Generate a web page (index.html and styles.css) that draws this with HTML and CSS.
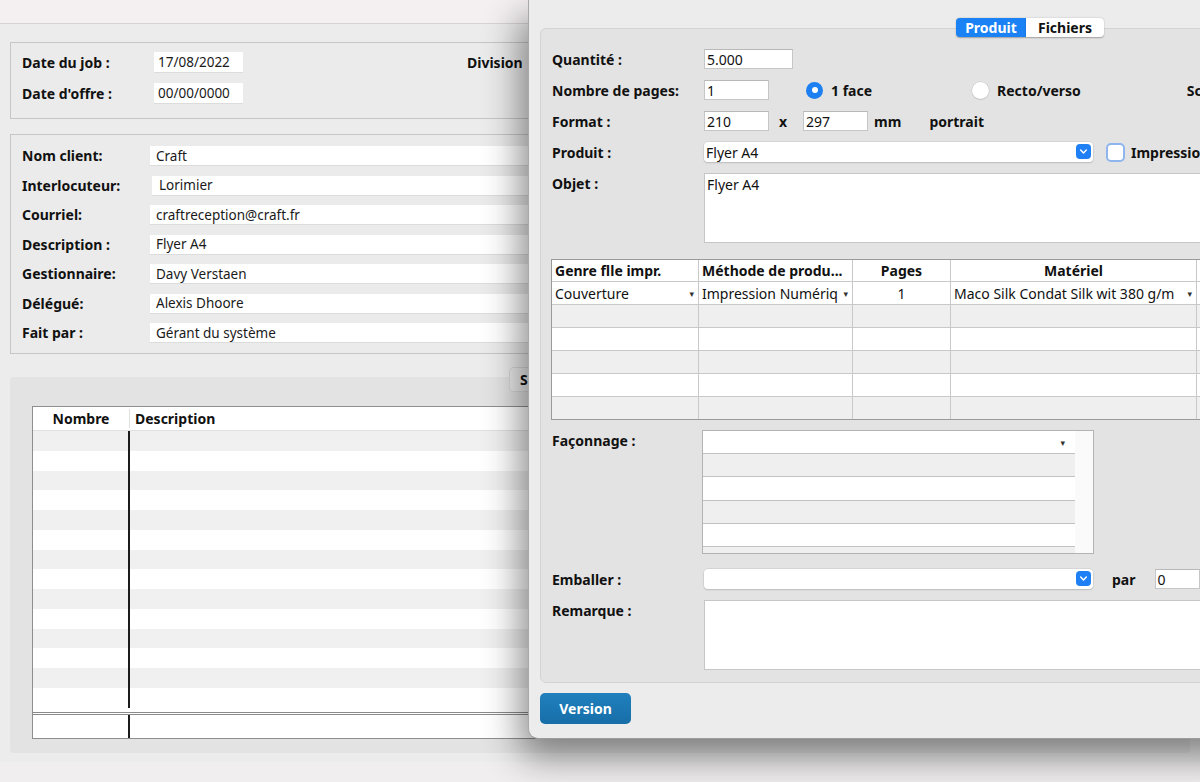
FILE: index.html
```html
<!DOCTYPE html>
<html lang="fr">
<head>
<meta charset="utf-8">
<title>Job</title>
<link rel="stylesheet" href="styles.css">
</head>
<body>
<div class="desk">
  <div class="back">
    <div class="titlebar"></div>
    <div class="back-body">
      <section class="panel p-dates">
        <div class="row">
          <span class="lbl">Date du job :</span>
          <span class="field short">17/08/2022</span>
          <span class="lbl division">Division</span>
        </div>
        <div class="row">
          <span class="lbl">Date d'offre :</span>
          <span class="field short">00/00/0000</span>
        </div>
      </section>
      <section class="panel p-client">
        <div class="row"><span class="lbl">Nom client:</span><span class="field long">Craft</span></div>
        <div class="row"><span class="lbl">Interlocuteur:</span><span class="field long indent">Lorimier</span></div>
        <div class="row"><span class="lbl">Courriel:</span><span class="field long">craftreception@craft.fr</span></div>
        <div class="row"><span class="lbl">Description :</span><span class="field long">Flyer A4</span></div>
        <div class="row"><span class="lbl">Gestionnaire:</span><span class="field long">Davy Verstaen</span></div>
        <div class="row"><span class="lbl">Délégué:</span><span class="field long">Alexis Dhoore</span></div>
        <div class="row"><span class="lbl">Fait par :</span><span class="field long">Gérant du système</span></div>
      </section>
      <section class="panel3">
        <div class="seg-back"><span>S</span></div>
        <div class="lines">
          <div class="lines-head"><span class="c1">Nombre</span><span class="c2">Description</span></div>
          <div class="lines-body">
            <div class="lrow"><span class="c1"></span><span class="c2"></span></div>
            <div class="lrow"><span class="c1"></span><span class="c2"></span></div>
            <div class="lrow"><span class="c1"></span><span class="c2"></span></div>
            <div class="lrow"><span class="c1"></span><span class="c2"></span></div>
            <div class="lrow"><span class="c1"></span><span class="c2"></span></div>
            <div class="lrow"><span class="c1"></span><span class="c2"></span></div>
            <div class="lrow"><span class="c1"></span><span class="c2"></span></div>
            <div class="lrow"><span class="c1"></span><span class="c2"></span></div>
            <div class="lrow"><span class="c1"></span><span class="c2"></span></div>
            <div class="lrow"><span class="c1"></span><span class="c2"></span></div>
            <div class="lrow"><span class="c1"></span><span class="c2"></span></div>
            <div class="lrow"><span class="c1"></span><span class="c2"></span></div>
            <div class="lrow"><span class="c1"></span><span class="c2"></span></div>
            <div class="lrow"><span class="c1"></span><span class="c2"></span></div>
          </div>
          <div class="lines-foot"><span class="c1"></span><span class="c2"></span></div>
        </div>
      </section>
    </div>
  </div>

  <div class="win">
    <div class="tabs">
      <span class="tab on">Produit</span><span class="tab">Fichiers</span>
    </div>
    <div class="group">
      <div class="frow">
        <span class="flbl">Quantité :</span>
        <span class="inp w89">5.000</span>
      </div>
      <div class="frow">
        <span class="flbl">Nombre de pages:</span>
        <span class="inp w65">1</span>
        <span class="radio on r1"></span><span class="rtxt">1 face</span>
        <span class="radio r2"></span><span class="rtxt">Recto/verso</span>
        <span class="rtxt sc">Sc</span>
      </div>
      <div class="frow">
        <span class="flbl">Format :</span>
        <span class="inp w65">210</span>
        <span class="rtxt times">x</span>
        <span class="inp w65">297</span>
        <span class="rtxt mm">mm</span>
        <span class="rtxt portrait">portrait</span>
      </div>
      <div class="frow">
        <span class="flbl">Produit :</span>
        <span class="select">Flyer A4<span class="chev"><svg viewBox="0 0 16 16" width="16" height="16"><path d="M5 6.5 L8 9.5 L11 6.5" fill="none" stroke="#fff" stroke-width="1.6" stroke-linecap="round" stroke-linejoin="round"/></svg></span></span>
        <span class="check"></span><span class="rtxt">Impressio</span>
      </div>
      <div class="frow top obj">
        <span class="flbl">Objet :</span>
        <span class="area">Flyer A4</span>
      </div>

      <div class="ptable">
        <div class="prow head">
          <span class="pc c-genre">Genre flle impr.</span>
          <span class="pc c-meth">Méthode de produ...</span>
          <span class="pc c-pages ctr">Pages</span>
          <span class="pc c-mat ctr">Matériel</span>
          <span class="pc c-more"></span>
        </div>
        <div class="prow white">
          <span class="pc c-genre dd">Couverture<i class="tri">▾</i></span>
          <span class="pc c-meth dd">Impression Numériq<i class="tri">▾</i></span>
          <span class="pc c-pages ctr">1</span>
          <span class="pc c-mat dd">Maco Silk Condat Silk wit 380 g/m<i class="tri">▾</i></span>
          <span class="pc c-more"></span>
        </div>
        <div class="prow gray"><span class="pc c-genre"></span><span class="pc c-meth"></span><span class="pc c-pages"></span><span class="pc c-mat"></span><span class="pc c-more"></span></div>
        <div class="prow white"><span class="pc c-genre"></span><span class="pc c-meth"></span><span class="pc c-pages"></span><span class="pc c-mat"></span><span class="pc c-more"></span></div>
        <div class="prow gray"><span class="pc c-genre"></span><span class="pc c-meth"></span><span class="pc c-pages"></span><span class="pc c-mat"></span><span class="pc c-more"></span></div>
        <div class="prow white"><span class="pc c-genre"></span><span class="pc c-meth"></span><span class="pc c-pages"></span><span class="pc c-mat"></span><span class="pc c-more"></span></div>
        <div class="prow gray last"><span class="pc c-genre"></span><span class="pc c-meth"></span><span class="pc c-pages"></span><span class="pc c-mat"></span><span class="pc c-more"></span></div>
      </div>

      <div class="frow top fac">
        <span class="flbl">Façonnage :</span>
        <div class="listbox">
          <div class="lb-rows">
            <div class="lb-row white first"><i class="tri">▾</i></div>
            <div class="lb-row gray"></div>
            <div class="lb-row white"></div>
            <div class="lb-row gray"></div>
            <div class="lb-row white"></div>
            <div class="lb-row gray part"></div>
          </div>
          <div class="lb-side"></div>
        </div>
      </div>

      <div class="frow emb">
        <span class="flbl">Emballer :</span>
        <span class="select"><span class="chev"><svg viewBox="0 0 16 16" width="16" height="16"><path d="M5 6.5 L8 9.5 L11 6.5" fill="none" stroke="#fff" stroke-width="1.6" stroke-linecap="round" stroke-linejoin="round"/></svg></span></span>
        <span class="rtxt par">par</span>
        <span class="inp w45">0</span>
      </div>
      <div class="frow top rem">
        <span class="flbl">Remarque :</span>
        <span class="area"></span>
      </div>
    </div>
    <div class="actions">
      <span class="btn">Version</span>
    </div>
  </div>
</div>
</body>
</html>
```

FILE: styles.css
```css
* { box-sizing: border-box; }
html, body {
  margin: 0;
  padding: 0;
  width: 1200px;
  height: 782px;
  overflow: hidden;
}
body {
  background: #f1eeef;
  font-family: "Noto Sans", "DejaVu Sans", sans-serif;
  font-size: 13px;
  color: #111;
}
.desk {
  position: relative;
  width: 1200px;
  height: 782px;
  overflow: hidden;
}

/* ---------- back window ---------- */
.titlebar {
  height: 24px;
  background: #f4f0f1;
  border-bottom: 1px solid #d6d3d4;
}
.back-body {
  background: #ececec;
  height: 738px;
  padding: 18px 0 0 10px;
  display: flex;
  flex-direction: column;
}
.panel {
  width: 1180px;
  border: 1px solid #c6c6c6;
  background: #ebebeb;
  padding-left: 11px;
  display: flex;
  flex-direction: column;
}
.p-dates {
  height: 77px;
  padding-top: 9px;
  gap: 11px;
}
.p-client {
  margin-top: 15px;
  height: 220px;
  padding-top: 11px;
  gap: 10.5px;
}
.row {
  display: flex;
  align-items: center;
  height: 19px;
}
.p-dates .row { height: 20px; }
.lbl {
  width: 128px;
  flex: none;
  font-weight: 700;
  font-size: 14px;
}
.p-dates .lbl { width: 132px; }
.division { margin-left: 224px; width: auto; }
.field {
  background: #fff;
  height: 100%;
  display: flex;
  align-items: center;
  padding-left: 6px;
  font-size: 13.5px;
  color: #1a1a1a;
  box-shadow: 0 1px 0 #dcdcdc;
}
.short { width: 89px; padding-left: 4px; }
.long { width: 1030px; }
.indent { padding-left: 7px; margin-left: 2px; }

.panel3 {
  margin-top: 23px;
  width: 1180px;
  height: 376px;
  background: #e3e3e3;
  border-radius: 4px;
  position: relative;
  padding: 29px 0 0 22px;
}
.seg-back {
  position: absolute;
  left: 500px;
  top: -9px;
  height: 23px;
  padding: 0 10px;
  background: #ececec;
  border-radius: 4px;
  box-shadow: 0 0 0 1px #d8d8d8;
  display: flex;
  align-items: center;
  font-weight: 700;
  font-size: 14px;
}
.lines {
  width: 1100px;
  border: 1px solid #8e8e8e;
  background: #fff;
  display: flex;
  flex-direction: column;
  height: 333px;
}
.lines .c1 { width: 97px; flex: none; }
.lines .c2 { flex: 1; }
.lines-head {
  height: 24px;
  display: flex;
  align-items: center;
  font-weight: 700;
  font-size: 14px;
  border-bottom: 1px solid #e0e0e0;
}
.lines-head .c1 { text-align: center; border-right: 1px solid #e0e0e0; }
.lines-head .c2 { padding-left: 5px; }
.lines-body { display: flex; flex-direction: column; flex: 1; }
.lrow { height: 19.75px; display: flex; flex: none; }
.lrow:nth-child(odd) { background: #f0f0f0; }
.lrow .c1, .lines-foot .c1 { border-right: 2px solid #1c1c1c; }
.lines-foot {
  height: 26px;
  display: flex;
  border-top: 3px double #8a8a8a;
}

/* ---------- front window ---------- */
.win {
  position: absolute;
  left: 528px;
  top: 0;
  width: 720px;
  height: 739px;
  background: #ececec;
  border-left: 1px solid #a8a8a8;
  border-bottom: 1px solid #9c9c9c;
  border-bottom-left-radius: 10px;
  box-shadow: -8px 18px 36px rgba(0, 0, 0, 0.45);
  padding: 18px 0 0 11px;
  display: flex;
  flex-direction: column;
}
.tabs {
  display: flex;
  margin-left: 416px;
  height: 19px;
  margin-bottom: -9px;
  position: relative;
  z-index: 2;
  font-weight: 700;
  font-size: 14px;
}
.tab {
  display: flex;
  align-items: center;
  justify-content: center;
  background: #fff;
  width: 78px;
  border-radius: 0 4px 4px 0;
  box-shadow: 0 0.5px 1.5px rgba(0,0,0,0.3);
}
.tab.on {
  background: #1b82f5;
  color: #fff;
  width: 70px;
  border-radius: 4px 0 0 4px;
}
.group {
  width: 690px;
  height: 655px;
  background: #e3e3e3;
  border: 1px solid #d3d3d3;
  border-radius: 6px;
  padding: 20px 0 0 11px;
  display: flex;
  flex-direction: column;
}
.frow {
  display: flex;
  align-items: center;
  height: 20px;
  margin-bottom: 11px;
  flex: none;
}
.frow.top { align-items: flex-start; height: auto; }
.frow.obj { margin-bottom: 16px; }
.flbl {
  width: 152px;
  flex: none;
  font-weight: 700;
  font-size: 14px;
}
.frow.top .flbl { padding-top: 1px; }
.inp {
  height: 20px;
  background: #fff;
  border: 1px solid #c6c6c6;
  border-top-color: #b8b8b8;
  padding-left: 2px;
  display: flex;
  align-items: center;
  font-size: 14px;
  flex: none;
}
.w89 { width: 89px; }
.w65 { width: 65px; }
.w45 { width: 45px; }
.radio {
  width: 17px;
  height: 17px;
  border-radius: 50%;
  background: #fff;
  box-shadow: 0 0 0 0.5px #c0c0c0, 0 1px 1px rgba(0,0,0,0.12);
  flex: none;
  position: relative;
}
.radio.on {
  background: #1c7ff2;
  box-shadow: none;
}
.radio.on::after {
  content: "";
  position: absolute;
  left: 5.5px;
  top: 5.5px;
  width: 6px;
  height: 6px;
  border-radius: 50%;
  background: #fff;
}
.r1 { margin-left: 37px; }
.r2 { margin-left: 100px; }
.rtxt { font-weight: 700; font-size: 14px; margin-left: 8px; white-space: nowrap; }
.sc { margin-left: 106px; }
.times { margin-left: 10px; margin-right: 16px; }
.mm { margin-left: 6px; }
.portrait { margin-left: 28px; }
.select {
  width: 389px;
  height: 20px;
  background: #fff;
  border-radius: 4px;
  box-shadow: 0 0 0 0.5px #c8c8c8, 0 1px 1.5px rgba(0,0,0,0.2);
  display: flex;
  align-items: center;
  padding-left: 2px;
  position: relative;
  flex: none;
  font-size: 14px;
}
.chev {
  position: absolute;
  right: 2px;
  top: 2px;
  width: 15px;
  height: 15px;
  border-radius: 4px;
  background: #1f7ff4;
  display: flex;
  align-items: center;
  justify-content: center;
}
.chev svg { width: 15px; height: 15px; }
.check {
  width: 19px;
  height: 19px;
  margin-left: 13px;
  border-radius: 5px;
  background: #fff;
  border: 2px solid #8fb5ef;
  flex: none;
}
.check + .rtxt { margin-left: 6px; }
.area {
  width: 520px;
  height: 70px;
  background: #fff;
  border: 1px solid #c6c6c6;
  padding: 1px 0 0 2px;
  flex: none;
  font-size: 14px;
}

/* product table */
.ptable {
  margin-left: -1px;
  width: 700px;
  border: 1px solid #9a9a9a;
  border-right: none;
  display: flex;
  flex-direction: column;
  flex: none;
  margin-bottom: 10px;
}
.prow { display: flex; height: 23px; border-bottom: 1px solid #c9c9c9; }
.prow.last { border-bottom: none; height: 22px; }
.prow.head { height: 22px; background: #fff; font-weight: 700; }
.prow.white { background: #fff; }
.prow.gray { background: #efefef; }
.pc {
  border-right: 1px solid #c9c9c9;
  display: flex;
  align-items: center;
  padding-left: 3px;
  white-space: nowrap;
  overflow: hidden;
  flex: none;
  font-size: 14px;
}
.pc.ctr { justify-content: center; padding-left: 0; }
.c-genre { width: 147px; }
.c-meth { width: 154px; }
.c-pages { width: 98px; }
.c-mat { width: 246px; }
.c-more { width: 60px; }
.pc.dd { justify-content: space-between; padding-right: 4px; }
.pc.dd .tri { flex: none; }
.tri {
  font-style: normal;
  font-size: 9px;
  color: #333;
  margin-left: 2px;
}

/* façonnage list */
.fac { margin-bottom: 15px; }
.fac .flbl { padding-top: 1px; }
.listbox {
  margin-left: -2px;
  width: 392px;
  height: 124px;
  border: 1px solid #b3b3b3;
  background: #f7f7f7;
  display: flex;
  overflow: hidden;
}
.lb-rows { width: 372px; display: flex; flex-direction: column; }
.lb-row { height: 23.3px; border-bottom: 1px solid #c2c2c2; flex: none; }
.lb-row.white { background: #fff; }
.lb-row.gray { background: #efefef; }
.lb-row.first { display: flex; align-items: center; justify-content: flex-end; padding-right: 10px; height: 23px; }
.lb-row.part { border-bottom: none; }
.lb-side { flex: 1; background: #fafafa; }

.emb { margin-bottom: 11px; }
.par { margin-left: 19px; margin-right: 0; }
.emb .inp { margin-left: 19px; }

.actions {
  padding-top: 10px;
}
.btn {
  display: inline-flex;
  align-items: center;
  justify-content: center;
  width: 91px;
  height: 31px;
  border-radius: 5px;
  background: linear-gradient(#2080bd, #176ea8);
  color: #fff;
  font-weight: 700;
  font-size: 14px;
}
```
